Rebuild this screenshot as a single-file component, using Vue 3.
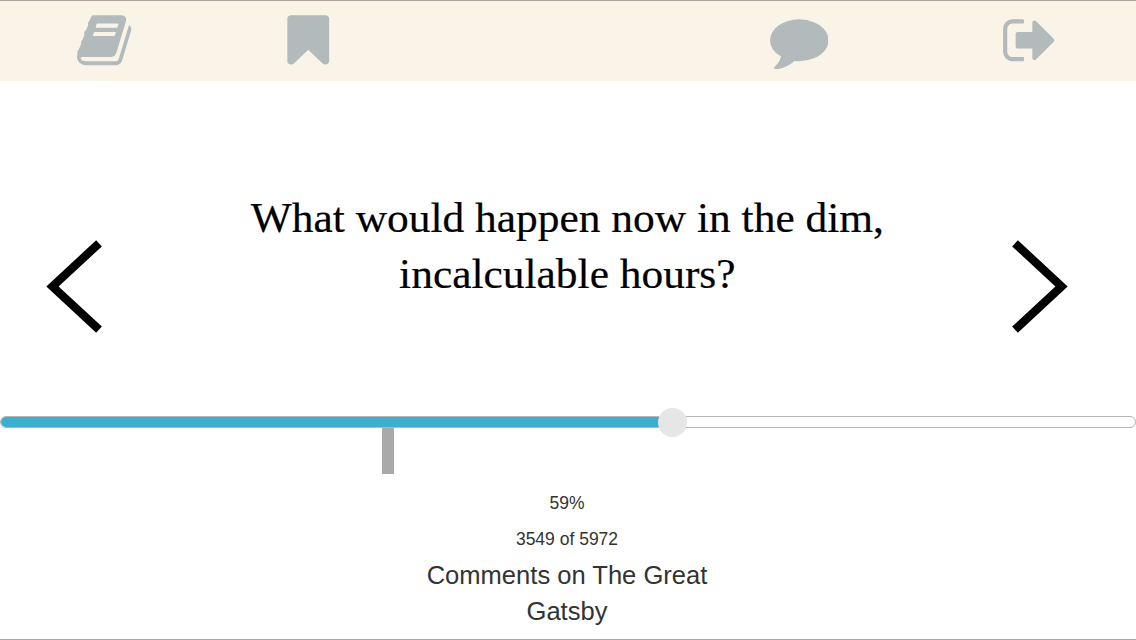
<script setup>
const progress = 59
const current = 3549
const total = 5972
const icons = [
  {
    name: 'book',
    path: 'M1639 478q40 57 18 129l-275 906q-19 64-76.5 107.5t-122.5 43.5h-923q-77 0-148.5-53.5t-99.5-131.5q-24-67-2-127 0-4 3-27t4-37q1-8-3-21.5t-3-19.5q2-11 8-21t16.5-23.5 16.5-23.5q23-38 45-91.5t30-91.5q3-10 .5-30t-.5-28q3-11 17-28t17-23q21-36 42-92t25-90q1-9-2.5-32t.5-28q4-13 22-30.5t22-22.5q19-26 42.5-84.5t27.5-96.5q1-8-3-25.5t-2-26.5q2-8 9-18t18-23 17-21q8-12 16.5-30.5t15-35 16-36 19.5-32 26.5-23.5 36-11.5 47.5 5.5l-1 3q38-9 51-9h761q74 0 114 56t18 130l-274 906q-36 119-71.5 153.5t-128.5 34.5h-869q-27 0-38 15-11 16-1 43 24 70 144 70h923q29 0 56-15.5t35-41.5l300-987q7-22 5-57 38 15 59 43zm-1064 2q-4 13 2 22.5t20 9.5h608q13 0 25.5-9.5t16.5-22.5l21-64q4-13-2-22.5t-20-9.5h-608q-13 0-25.5 9.5t-16.5 22.5zm-83 256q-4 13 2 22.5t20 9.5h608q13 0 25.5-9.5t16.5-22.5l21-64q4-13-2-22.5t-20-9.5h-608q-13 0-25.5 9.5t-16.5 22.5z',
  },
  {
    name: 'bookmark',
    path: 'M1420 128q23 0 44 9 33 13 52.5 41t19.5 62v1289q0 34-19.5 62t-52.5 41q-19 8-44 8-48 0-83-32l-441-424-441 424q-36 33-83 33-23 0-44-9-33-13-52.5-41t-19.5-62v-1289q0-34 19.5-62t52.5-41q21-9 44-9h1048z',
  },
  {
    name: 'comment',
    path: 'M1792 896q0 174-120 321.5t-326 233-450 85.5q-70 0-145-8-198 175-460 242-49 14-114 22-17 2-30.5-9t-17.5-29v-1q-3-4-.5-12t2-10 4.5-9.5l6-9 7-8.5 8-9q7-8 31-34.5t34.5-38 31-39.5 32.5-51 27-59 26-76q-157-89-247.5-220t-90.5-281q0-130 71-248.5t191-204.5 286-136.5 348-50.5q244 0 450 85.5t326 233 120 321.5z',
  },
  {
    name: 'exit',
    path: 'M704 1440q0 4 1 20t.5 26.5-3 23.5-10 19.5-20.5 6.5h-320q-119 0-203.5-84.5t-84.5-203.5v-704q0-119 84.5-203.5t203.5-84.5h320q13 0 22.5 9.5t9.5 22.5q0 4 1 20t.5 26.5-3 23.5-10 19.5-20.5 6.5h-320q-66 0-113 47t-47 113v704q0 66 47 113t113 47h312l11.5 1 11.5 3 8 5.5 7 9 2 13.5zm928-544q0 26-19 45l-544 544q-19 19-45 19t-45-19-19-45v-288h-448q-26 0-45-19t-19-45v-384q0-26 19-45t45-19h448v-288q0-26 19-45t45-19 45 19l544 544q19 19 19 45z',
  },
]
</script>

<template>
  <div class="reader">
    <header class="toolbar">
      <svg v-for="icon in icons" :key="icon.name" class="icon" :class="icon.name" viewBox="0 0 1792 1792">
        <path :d="icon.path" />
      </svg>
    </header>

    <main class="page">
      <svg class="arrow" viewBox="0 0 60 100">
        <path d="M57 7.3 10.5 50.5 57 93.7" />
      </svg>
      <p class="sentence">
        What would happen now in the dim,<br />
        incalculable hours?
      </p>
      <svg class="arrow" viewBox="0 0 60 100">
        <path d="M3 7.3 49.5 50.5 3 93.7" />
      </svg>
    </main>

    <div class="slider">
      <div class="fill" :style="{ width: progress + '%' }"></div>
      <div class="thumb"></div>
      <div class="marker"></div>
    </div>

    <footer class="info">
      <div class="small">{{ progress }}%</div>
      <div class="small">{{ current }} of {{ total }}</div>
      <div class="title">Comments on The Great<br />Gatsby</div>
    </footer>
  </div>
</template>

<style>
body {
  margin: 0;
  background: #fff;
}
</style>

<style scoped>
.reader {
  box-sizing: border-box;
  width: 1136px;
  height: 640px;
  overflow: hidden;
  display: flex;
  flex-direction: column;
  border-top: 1px solid #aba49e;
  border-bottom: 1px solid #aaa;
  background: #fff;
}
.toolbar {
  flex: none;
  height: 80px;
  display: flex;
  background: #faf3e7;
}
.icon {
  flex: none;
  width: 58.5px;
  height: 58.5px;
  margin-top: 9.5px;
  fill: #b2babb;
}
.book { margin-left: 76.8px; }
.bookmark { margin-left: 143.9px; }
.comment { margin-left: 431.9px; }
.exit { margin-left: 172.7px; }
.page {
  flex: none;
  height: 335px;
  display: flex;
  justify-content: space-between;
  padding: 0 64px 0 42px;
}
.arrow {
  flex: none;
  width: 60px;
  height: 100px;
  margin-top: 155px;
  fill: none;
  stroke: #000;
  stroke-width: 8.4px;
}
.sentence {
  flex: 1;
  margin: 109px 0 0;
  padding-left: 20px;
  font: 42px/56px "Liberation Serif", serif;
  color: #000;
  text-align: center;
  white-space: nowrap;
  transform: scaleX(1.034);
  -webkit-text-stroke: 0.2px #000;
}
.slider {
  flex: none;
  position: relative;
  box-sizing: border-box;
  height: 12px;
  border: 1px solid #b5b5b5;
  border-radius: 6px;
  background: #fff;
}
.fill {
  height: 100%;
  border-radius: 5px 0 0 5px;
  background: #3aafce;
}
.thumb {
  position: absolute;
  left: 657px;
  top: -9px;
  width: 29px;
  height: 29px;
  border-radius: 50%;
  background: #e6e6e6;
}
.marker {
  position: absolute;
  left: 381px;
  top: 11px;
  width: 12px;
  height: 46px;
  background: #a9a9a9;
}
.info {
  margin-top: 57px;
  padding-right: 2px;
  font-family: "Liberation Sans", Arial, sans-serif;
  line-height: 36px;
  text-align: center;
  color: #333;
}
.small { font-size: 17.5px; }
.title { font-size: 25.55px; }
</style>
